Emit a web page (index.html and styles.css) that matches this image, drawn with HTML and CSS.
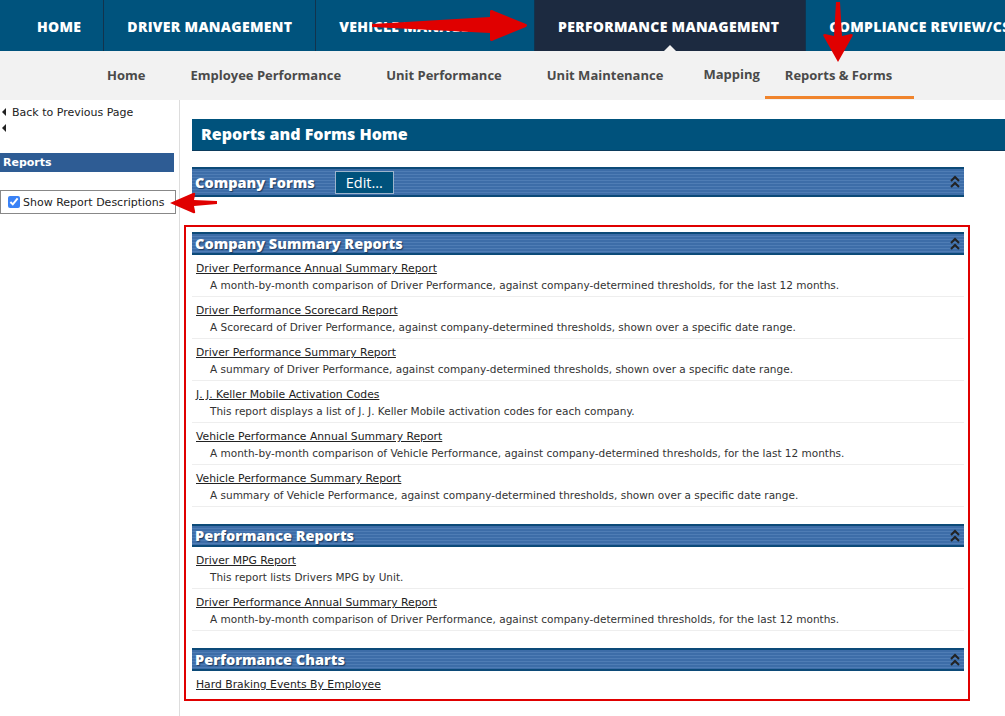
FILE: index.html
```html
<!DOCTYPE html>
<html lang="en">
<head>
    <meta charset="UTF-8">
    <meta name="viewport" content="width=device-width, initial-scale=1.0">
    <title>Reports and Forms Home</title>
    <link rel="stylesheet" href="styles.css">
</head>
<body>
    <nav class="topnav">
        <a class="topnav-item first">HOME</a>
        <a class="topnav-item">DRIVER MANAGEMENT</a>
        <a class="topnav-item">VEHICLE MANAGEMENT</a>
        <a class="topnav-item active">PERFORMANCE MANAGEMENT</a>
        <a class="topnav-item">COMPLIANCE REVIEW/CSA</a>
    </nav>

    <nav class="subnav">
        <a class="subnav-item">Home</a>
        <a class="subnav-item">Employee Performance</a>
        <a class="subnav-item">Unit Performance</a>
        <a class="subnav-item">Unit Maintenance</a>
        <a class="subnav-item mapping">Mapping</a>
        <a class="subnav-item current">Reports &amp; Forms</a>
    </nav>

    <div class="page">
        <aside class="sidebar">
            <a class="back"><span class="tri"></span>Back to Previous Page</a>
            <a class="back"><span class="tri"></span></a>
            <div class="side-title">Reports</div>
            <label class="show-desc">
                <input type="checkbox" checked>
                Show Report Descriptions
            </label>
        </aside>

        <main class="main">
            <h1 class="page-title">Reports and Forms Home</h1>

            <div class="sections">
                <div class="section">
                    <div class="bar tall">
                        <span class="bar-title">Company Forms</span>
                        <button class="edit-btn">Edit...</button>
                        <span class="collapse"></span>
                    </div>
                </div>

                <div class="highlight">
                    <div class="section">
                        <div class="bar">
                            <span class="bar-title">Company Summary Reports</span>
                            <span class="collapse"></span>
                        </div>
                        <div class="report">
                            <a class="report-link">Driver Performance Annual Summary Report</a>
                            <p class="report-desc">A month-by-month comparison of Driver Performance, against company-determined thresholds, for the last 12 months.</p>
                        </div>
                        <div class="report">
                            <a class="report-link">Driver Performance Scorecard Report</a>
                            <p class="report-desc">A Scorecard of Driver Performance, against company-determined thresholds, shown over a specific date range.</p>
                        </div>
                        <div class="report">
                            <a class="report-link">Driver Performance Summary Report</a>
                            <p class="report-desc">A summary of Driver Performance, against company-determined thresholds, shown over a specific date range.</p>
                        </div>
                        <div class="report">
                            <a class="report-link">J. J. Keller Mobile Activation Codes</a>
                            <p class="report-desc">This report displays a list of J. J. Keller Mobile activation codes for each company.</p>
                        </div>
                        <div class="report">
                            <a class="report-link">Vehicle Performance Annual Summary Report</a>
                            <p class="report-desc">A month-by-month comparison of Vehicle Performance, against company-determined thresholds, for the last 12 months.</p>
                        </div>
                        <div class="report">
                            <a class="report-link">Vehicle Performance Summary Report</a>
                            <p class="report-desc">A summary of Vehicle Performance, against company-determined thresholds, shown over a specific date range.</p>
                        </div>
                    </div>

                    <div class="section">
                        <div class="bar">
                            <span class="bar-title">Performance Reports</span>
                            <span class="collapse"></span>
                        </div>
                        <div class="report">
                            <a class="report-link">Driver MPG Report</a>
                            <p class="report-desc">This report lists Drivers MPG by Unit.</p>
                        </div>
                        <div class="report">
                            <a class="report-link">Driver Performance Annual Summary Report</a>
                            <p class="report-desc">A month-by-month comparison of Driver Performance, against company-determined thresholds, for the last 12 months.</p>
                        </div>
                    </div>

                    <div class="section last">
                        <div class="bar">
                            <span class="bar-title">Performance Charts</span>
                            <span class="collapse"></span>
                        </div>
                        <div class="report short">
                            <a class="report-link">Hard Braking Events By Employee</a>
                        </div>
                    </div>
                </div>
            </div>
        </main>
    </div>

    <!-- annotation arrows -->
    <svg class="arrow arrow-right" width="160" height="40" viewBox="0 0 160 40">
        <path d="M2 14 L120 7 L120 1 Q121 -1 124 1 L156 14 Q158 15 156 17 L124 30 Q121 32 120 30 L120 23 L2 17 Z" fill="#e00000"/>
    </svg>
    <svg class="arrow arrow-down" width="34" height="62" viewBox="0 0 34 62">
        <path d="M15 0 L19 0 L21 34 L30 32 Q33 32 31 35 L17 60 L3 35 Q1 32 4 32 L13 34 Z" fill="#e00000"/>
    </svg>
    <svg class="arrow arrow-left" width="50" height="24" viewBox="0 0 50 24">
        <path d="M1 12 L24 2 Q27 1 26 4 L25 9 L48 10 L48 13 L25 15 L26 20 Q27 23 24 22 Z" fill="#e00000"/>
    </svg>
</body>
</html>
```

FILE: styles.css
```css
body{
    margin: 0;
    padding: 0;
    font-family: "DejaVu Sans", Verdana, sans-serif;
    font-size: 11px;
    color: #222;
    background-color: #fff;
    position: relative;
    overflow: hidden;
}

a{
    cursor: pointer;
}

/* top navigation */
.topnav{
    display: flex;
    height: 51px;
    background-color: #00537d;
    white-space: nowrap;
    overflow: hidden;
}

.topnav-item{
    position: relative;
    display: flex;
    align-items: center;
    padding: 2px 23px 0 23px;
    color: #fff;
    font-family: "Open Sans", Arial, sans-serif;
    font-weight: 800;
    font-size: 14px;
    letter-spacing: 0.3px;
    border-right: 1px solid #12334d;
}

.topnav-item.first{
    padding-left: 37px;
    padding-right: 22px;
}

.topnav-item.active{
    padding-right: 26px;
    background-color: #1c2a40;
}

.topnav-item.active::after{
    content: "";
    position: absolute;
    left: 50%;
    bottom: 0;
    margin-left: -6px;
    border-left: 6px solid transparent;
    border-right: 6px solid transparent;
    border-bottom: 6px solid #f2f2f2;
}

/* sub navigation */
.subnav{
    display: flex;
    gap: 3px;
    height: 49px;
    padding-left: 86px;
    background-color: #f2f2f2;
}

.subnav-item{
    display: flex;
    align-items: center;
    padding: 2px 21px 0 21px;
    color: #4a4a4a;
    font-family: "Open Sans", Arial, sans-serif;
    font-weight: 700;
    font-size: 13px;
    border-bottom: 3px solid transparent;
    margin-bottom: 1px;
}

.subnav-item.mapping{
    padding: 0 2px 0 16px;
}

.subnav-item.current{
    padding-left: 20px;
    padding-right: 22px;
    border-bottom-color: #f0842c;
}

/* page body */
.page{
    display: flex;
}

.sidebar{
    width: 180px;
    min-height: 616px;
    border-right: 1px solid #ddd;
    padding-top: 4px;
    box-sizing: border-box;
}

.back{
    display: flex;
    align-items: center;
    height: 16px;
    color: #222;
}

.tri{
    display: inline-block;
    width: 0;
    height: 0;
    margin: 0 6px 0 2px;
    border-top: 4px solid transparent;
    border-bottom: 4px solid transparent;
    border-right: 4px solid #222;
}

.side-title{
    width: 174px;
    height: 19px;
    margin-top: 17px;
    padding-left: 3px;
    box-sizing: border-box;
    background-color: #2e5c94;
    color: #fff;
    font-weight: bold;
    line-height: 20px;
}

.show-desc{
    display: flex;
    align-items: center;
    width: 176px;
    height: 24px;
    margin-top: 18px;
    border: 1px solid #888;
    box-sizing: border-box;
    font-size: 11px;
    color: #222;
}

.show-desc input{
    width: 12px;
    height: 12px;
    margin: 0 3px 0 7px;
    accent-color: #3a82f6;
}

.main{
    flex: 1;
    padding: 19px 0 0 12px;
}

.page-title{
    margin: 0;
    height: 31px;
    padding-left: 9px;
    background-color: #00527c;
    border-bottom: 1px solid #0b3b5c;
    color: #fff;
    font-family: "Open Sans", Arial, sans-serif;
    font-weight: 800;
    font-size: 16px;
    line-height: 31px;
}

.sections{
    margin: 16px 41px 0 0;
}

.section{
    margin-bottom: 17px;
}

.section.last{
    margin-bottom: 0;
}

.bar{
    display: flex;
    align-items: center;
    height: 19px;
    padding-left: 3px;
    border-top: 2px solid #0c4a78;
    border-bottom: 2px solid #0c4a78;
    background: repeating-linear-gradient(to bottom, #3d6da8 0, #3d6da8 2px, #4f7db5 2px, #4f7db5 3px);
}

.bar.tall{
    height: 26px;
}

.bar-title{
    color: #fff;
    font-family: "Open Sans", Arial, sans-serif;
    font-weight: 800;
    font-size: 14.5px;
    text-shadow: 1px 1px 1px #1d3a60;
}

.edit-btn{
    height: 23px;
    margin-left: 20px;
    padding: 0 10px;
    background-color: #00527c;
    border: 1px solid #9db4cc;
    color: #fff;
    font-family: "Open Sans", Arial, sans-serif;
    font-size: 14.5px;
}

.collapse{
    width: 10px;
    height: 14px;
    margin-left: auto;
    margin-right: 4px;
    background: no-repeat center / 10px 14px url("data:image/svg+xml;utf8,<svg xmlns='http://www.w3.org/2000/svg' width='10' height='14' viewBox='0 0 10 14'><path d='M1 6 L5 2 L9 6 M1 12 L5 8 L9 12' fill='none' stroke='%23222' stroke-width='2'/></svg>");
}

.highlight{
    margin: 28px -6px 0 -8px;
    padding: 5px 4px 0 6px;
    border: 2px solid #e00000;
}

.report{
    padding: 5px 0 2px 4px;
    border-bottom: 1px solid #eee;
}

.report.short{
    padding-bottom: 6px;
    border-bottom: none;
}

.report-link{
    display: block;
    line-height: 17px;
    font-size: 10.8px;
    color: #222;
    text-decoration: underline;
}

.report-desc{
    margin: 0;
    padding-left: 14px;
    line-height: 17px;
    font-size: 10.5px;
    color: #333;
}

/* red annotation arrows */
.arrow{
    position: absolute;
}

.arrow-right{
    left: 370px;
    top: 10px;
}

.arrow-down{
    left: 821px;
    top: 2px;
}

.arrow-left{
    left: 169px;
    top: 191px;
}
```
